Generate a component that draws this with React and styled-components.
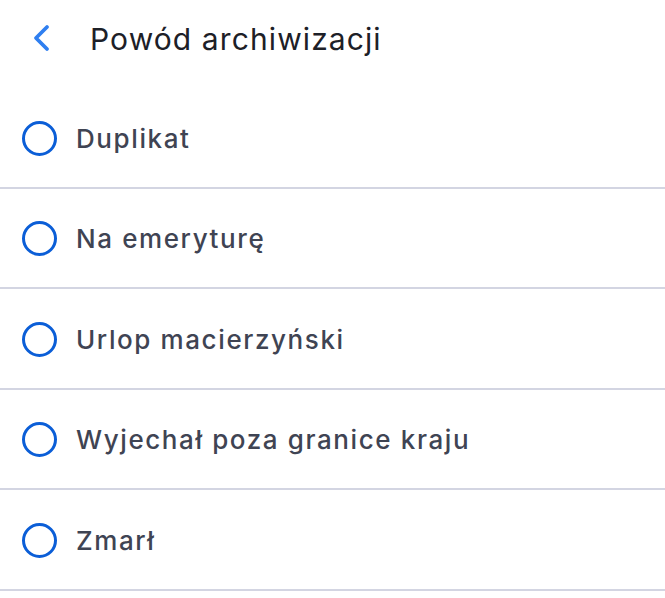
import React, { useState } from 'react';
import styled, { createGlobalStyle } from 'styled-components';

const GlobalStyle = createGlobalStyle`
  body {
    margin: 0;
    background: #ffffff;
    font-family: Inter, "Noto Sans", "Liberation Sans", sans-serif;
  }
`

const Page = styled.div`
  width: 665px;
  background: #fff;
`

const Header = styled.header`
  height: 88px;
  display: flex;
  align-items: center;
  padding-left: 29px;
  box-sizing: border-box;
`

const BackButton = styled.button`
  width: 24px;
  height: 30px;
  padding: 0;
  border: none;
  background: none;
  display: flex;
  align-items: center;
  justify-content: center;
  cursor: pointer;
  margin-right: 37px;
  margin-top: -12px;
`

const Title = styled.h1`
  margin: 0;
  margin-top: -10px;
  font-size: 30px;
  font-weight: 400;
  color: #1d2027;
  letter-spacing: 1.1px;
`

const List = styled.ul`
  list-style: none;
  margin: 0;
  padding: 0;
`

const Row = styled.li`
  height: 96.5px;
  display: flex;
  align-items: center;
  padding: 2px 22px 0;
  border-bottom: 2px solid #d3d5e2;
  box-sizing: content-box;
  cursor: pointer;
`

const Radio = styled.span`
  width: 29px;
  height: 29px;
  border-radius: 50%;
  border: 3px solid #0b5ed7;
  box-sizing: content-box;
  flex-shrink: 0;
  display: flex;
  align-items: center;
  justify-content: center;
  &::after {
    content: '';
    width: ${p => (p.checked ? '15px' : '0')};
    height: ${p => (p.checked ? '15px' : '0')};
    border-radius: 50%;
    background: #0b5ed7;
  }
`

const Label = styled.span`
  margin-left: 19px;
  font-size: 26px;
  font-weight: 500;
  color: #3f4453;
  letter-spacing: 1.6px;
`

const reasons = [
  'Duplikat',
  'Na emeryturę',
  'Urlop macierzyński',
  'Wyjechał poza granice kraju',
  'Zmarł',
]

export default function App() {
  const [selected, setSelected] = useState(null)
  return (
    <Page>
      <GlobalStyle />
      <Header>
        <BackButton aria-label="Wstecz">
          <svg width="20" height="28" viewBox="0 0 20 28" fill="none">
            <path
              d="M16 3 L5 14 L16 25"
              stroke="#2f7ff0"
              strokeWidth="3.8"
              strokeLinecap="round"
              strokeLinejoin="round"
            />
          </svg>
        </BackButton>
        <Title>Powód archiwizacji</Title>
      </Header>
      <List>
        {reasons.map(r => (
          <Row key={r} onClick={() => setSelected(r)}>
            <Radio checked={selected === r} />
            <Label>{r}</Label>
          </Row>
        ))}
      </List>
    </Page>
  )
}
